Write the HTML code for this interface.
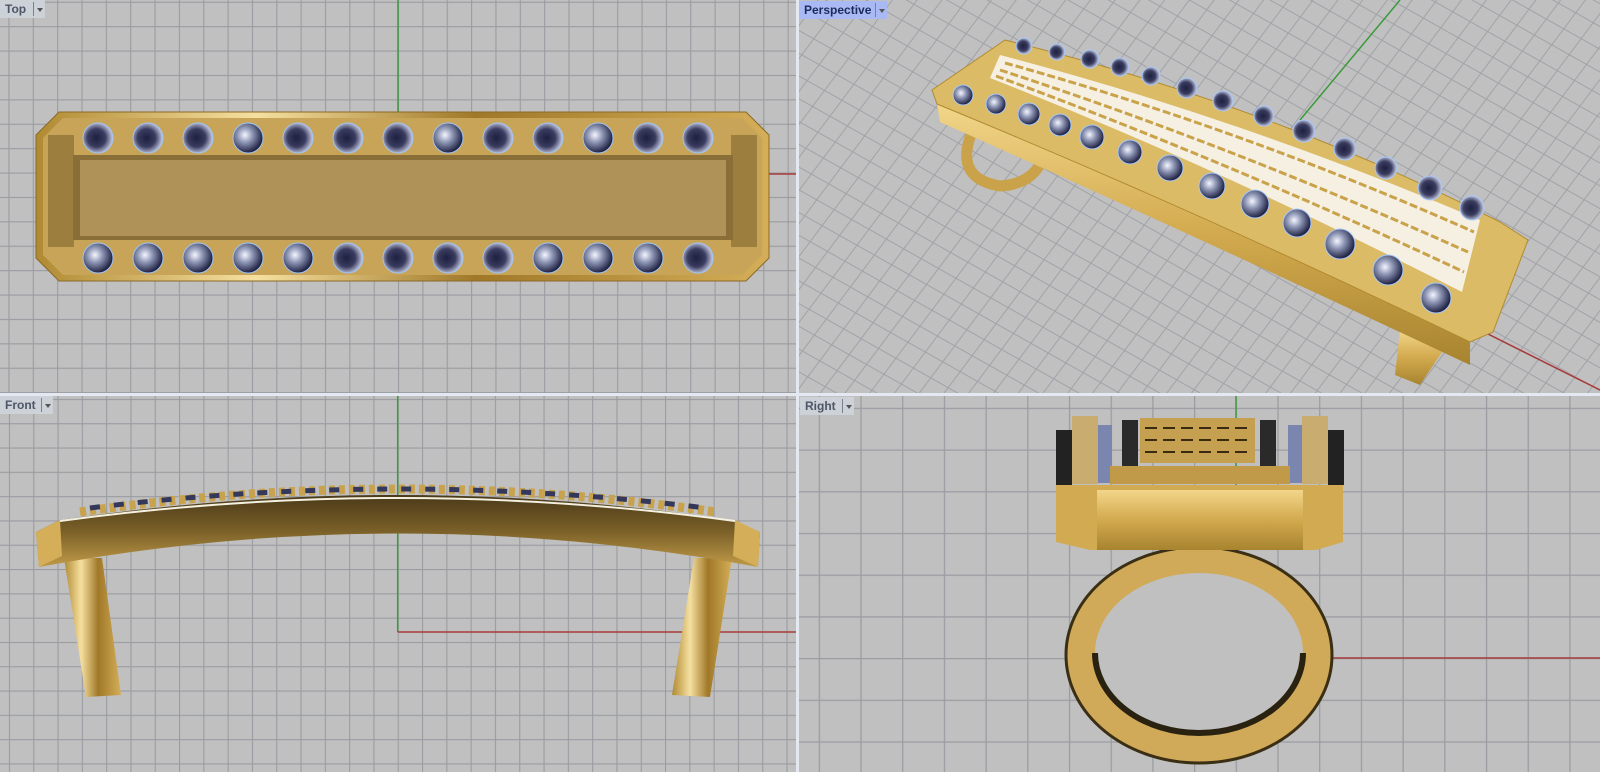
<!DOCTYPE html>
<html><head><meta charset="utf-8">
<style>
html,body{margin:0;padding:0;width:1600px;height:772px;overflow:hidden;background:#e4e8f0;}
.lbl{position:absolute;height:18px;background:#cdd1d8;font:bold 12px "Liberation Sans",sans-serif;color:#4d5666;line-height:18px;padding-left:5px;box-sizing:border-box;}
.lbl .dd{position:absolute;top:2px;bottom:2px;width:11px;border-left:1px solid #7a8290;}
.lbl .dd:after{content:"";position:absolute;left:3px;top:6px;border-left:3px solid transparent;border-right:3px solid transparent;border-top:4px solid #555;}
</style></head><body>
<svg width="1600" height="772" viewBox="0 0 1600 772" style="position:absolute;left:0;top:0">
<defs>
<pattern id="gTop" width="24.35" height="24.4" patternUnits="userSpaceOnUse" x="8.4" y="1.7">
<rect width="24.35" height="24.4" fill="#c0c0c0"/><path d="M0.5 0V24.4M0 0.5H24.35" stroke="#9a9ca2" stroke-width="1.2"/></pattern>
<pattern id="gFront" width="24.3" height="24.3" patternUnits="userSpaceOnUse" x="8.9" y="10.1">
<rect width="24.3" height="24.3" fill="#c0c0c0"/><path d="M0.5 0V24.3M0 0.5H24.3" stroke="#9a9ca2" stroke-width="1.2"/></pattern>
<pattern id="gRight" width="41.7" height="41.7" patternUnits="userSpaceOnUse" x="26.4" y="32.5">
<rect width="41.7" height="41.7" fill="#c0c0c0"/><path d="M0.5 0V41.7M0 0.5H41.7" stroke="#9a9ca2" stroke-width="1.5"/></pattern>
<pattern id="gPersp" width="20" height="20" patternUnits="userSpaceOnUse" patternTransform="matrix(0.87,0.49,0.6,-0.8,1236,300)">
<rect width="20" height="20" fill="#c0c0c0"/><path d="M0.5 0V20M0 0.5H20" stroke="#a0a2a8" stroke-width="1"/></pattern>
<linearGradient id="gold" x1="0" y1="0" x2="0" y2="1"><stop offset="0" stop-color="#f2d68a"/><stop offset="0.5" stop-color="#d2a94e"/><stop offset="1" stop-color="#a8842f"/></linearGradient>
<linearGradient id="goldH" x1="0" y1="0" x2="1" y2="0"><stop offset="0" stop-color="#b08a32"/><stop offset="0.3" stop-color="#f6e0a0"/><stop offset="0.6" stop-color="#a07828"/><stop offset="1" stop-color="#d4ae58"/></linearGradient>
<linearGradient id="band" x1="0" y1="0" x2="0" y2="1"><stop offset="0" stop-color="#4a3a1a"/><stop offset="0.5" stop-color="#7a6028"/><stop offset="1" stop-color="#c09a48"/></linearGradient>
<radialGradient id="gem" cx="0.4" cy="0.4" r="0.6"><stop offset="0" stop-color="#f4f6ff"/><stop offset="0.45" stop-color="#8890b0"/><stop offset="1" stop-color="#1e2040"/></radialGradient>
<radialGradient id="gem2" cx="0.45" cy="0.5" r="0.6"><stop offset="0" stop-color="#1e2040"/><stop offset="0.5" stop-color="#3a3c60"/><stop offset="1" stop-color="#e8ecff"/></radialGradient>
</defs>
<rect x="0" y="0" width="796" height="393" fill="url(#gTop)"/>
<rect x="799" y="0" width="801" height="393" fill="url(#gPersp)"/>
<rect x="0" y="396" width="796" height="376" fill="url(#gFront)"/>
<rect x="799" y="396" width="801" height="376" fill="url(#gRight)"/>
<line x1="398" y1="0" x2="398" y2="174" stroke="#3c9a3c" stroke-width="1.5"/>
<line x1="398" y1="174" x2="796" y2="174" stroke="#a83a3a" stroke-width="1.5"/>
<line x1="397.7" y1="396" x2="397.7" y2="632" stroke="#3c9a3c" stroke-width="1.5"/>
<line x1="397.7" y1="632" x2="796" y2="632" stroke="#a83a3a" stroke-width="1.5"/>
<line x1="1236" y1="396" x2="1236" y2="658" stroke="#3c9a3c" stroke-width="1.5"/>
<line x1="1236" y1="658" x2="1600" y2="658" stroke="#a83a3a" stroke-width="1.5"/>
<line x1="1400" y1="0" x2="1300" y2="120" stroke="#3c9a3c" stroke-width="1.5"/>
<line x1="1440" y1="310" x2="1600" y2="390" stroke="#a83a3a" stroke-width="1.5"/>

<!-- TOP VIEW -->
<polygon points="59,112 746,112 769,135 769,258 746,281 59,281 36,258 36,135" fill="url(#goldH)" stroke="#8a6a28"/>
<polygon points="63,118 742,118 762,138 762,255 742,275 63,275 43,255 43,138" fill="#c7a458"/>
<rect x="48" y="135" width="26" height="112" fill="#9c7e3e"/>
<rect x="731" y="135" width="26" height="112" fill="#9c7e3e"/>
<rect x="73" y="155" width="660" height="85" fill="#8a6e38"/>
<rect x="80" y="160" width="646" height="76" fill="#ae9258"/>
<g stroke="#a0c4f4">
<circle cx="98" cy="138" r="15" fill="url(#gem2)"/><circle cx="148" cy="138" r="15" fill="url(#gem2)"/><circle cx="198" cy="138" r="15" fill="url(#gem2)"/><circle cx="248" cy="138" r="15" fill="url(#gem)"/><circle cx="298" cy="138" r="15" fill="url(#gem2)"/><circle cx="348" cy="138" r="15" fill="url(#gem2)"/><circle cx="398" cy="138" r="15" fill="url(#gem2)"/><circle cx="448" cy="138" r="15" fill="url(#gem)"/><circle cx="498" cy="138" r="15" fill="url(#gem2)"/><circle cx="548" cy="138" r="15" fill="url(#gem2)"/><circle cx="598" cy="138" r="15" fill="url(#gem)"/><circle cx="648" cy="138" r="15" fill="url(#gem2)"/><circle cx="698" cy="138" r="15" fill="url(#gem2)"/>
<circle cx="98" cy="258" r="15" fill="url(#gem)"/><circle cx="148" cy="258" r="15" fill="url(#gem)"/><circle cx="198" cy="258" r="15" fill="url(#gem)"/><circle cx="248" cy="258" r="15" fill="url(#gem)"/><circle cx="298" cy="258" r="15" fill="url(#gem)"/><circle cx="348" cy="258" r="15" fill="url(#gem2)"/><circle cx="398" cy="258" r="15" fill="url(#gem2)"/><circle cx="448" cy="258" r="15" fill="url(#gem2)"/><circle cx="498" cy="258" r="15" fill="url(#gem2)"/><circle cx="548" cy="258" r="15" fill="url(#gem)"/><circle cx="598" cy="258" r="15" fill="url(#gem)"/><circle cx="648" cy="258" r="15" fill="url(#gem)"/><circle cx="698" cy="258" r="15" fill="url(#gem2)"/>
</g>

<!-- PERSPECTIVE VIEW -->
<path d="M975,125 Q950,178 1000,186 Q1032,184 1042,160" fill="none" stroke="#c9a24a" stroke-width="11"/>
<polygon points="1400,330 1450,340 1420,385 1395,375" fill="url(#gold)"/>
<path d="M937,104 Q1200,212 1470,340 L1470,365 Q1200,238 940,122 Z" fill="url(#gold)"/>
<path d="M932,90 L1005,40 Q1270,105 1500,222 L1528,240 L1493,332 L1470,342 Q1200,212 937,104 Z" fill="#dcbb66" stroke="#b08a30"/>
<path d="M1000,55 Q1240,118 1480,220 L1462,292 Q1220,168 990,78 Z" fill="#f6f0e2"/>
<path d="M1005,63 Q1240,128 1474,232 M1000,70 Q1230,145 1468,252 M996,76 Q1225,160 1464,272" stroke="#c9a24a" stroke-width="3" fill="none" stroke-dasharray="8 3"/>
<g fill="url(#gem)" stroke="#a8c8f8">
<circle cx="963" cy="95" r="10"/><circle cx="996" cy="104" r="10"/><circle cx="1029" cy="114" r="11"/><circle cx="1060" cy="125" r="11"/><circle cx="1092" cy="137" r="12"/><circle cx="1130" cy="152" r="12"/><circle cx="1170" cy="168" r="13"/><circle cx="1212" cy="186" r="13"/><circle cx="1255" cy="204" r="14"/><circle cx="1297" cy="223" r="14"/><circle cx="1340" cy="244" r="15"/><circle cx="1388" cy="270" r="15"/><circle cx="1436" cy="298" r="15"/>
</g>
<g fill="url(#gem2)" stroke="#a8c8f8">
<circle cx="1024" cy="46" r="8"/><circle cx="1057" cy="52" r="8"/><circle cx="1090" cy="59" r="9"/><circle cx="1120" cy="67" r="9"/><circle cx="1151" cy="76" r="9"/><circle cx="1187" cy="88" r="10"/><circle cx="1223" cy="101" r="10"/><circle cx="1264" cy="116" r="10"/><circle cx="1304" cy="131" r="11"/><circle cx="1345" cy="149" r="11"/><circle cx="1386" cy="168" r="11"/><circle cx="1430" cy="188" r="12"/><circle cx="1472" cy="208" r="12"/>
</g>

<!-- FRONT VIEW -->
<polygon points="64,558 102,558 121,695 86,697" fill="url(#goldH)"/>
<polygon points="694,558 732,558 710,697 672,695" fill="url(#goldH)"/>
<path d="M36,532 L60,520 Q398,470 730,520 L760,532 L758,567 Q398,500 39,567 Z" fill="url(#band)"/>
<path d="M36,532 L60,520 L62,556 L39,567 Z M760,532 L735,520 L733,556 L758,567 Z" fill="#d4ae58"/>
<path d="M60,521 Q398,475 735,521" stroke="#f4f0e0" stroke-width="2" fill="none"/>
<path d="M80,512 Q398,466 716,512" stroke="#c8a24c" stroke-width="9" fill="none" stroke-dasharray="6 4"/>
<path d="M90,508 Q398,470 706,508" stroke="#34385a" stroke-width="5" fill="none" stroke-dasharray="10 14"/>

<!-- RIGHT VIEW -->
<ellipse cx="1199" cy="655" rx="133" ry="108" fill="#d0aa58"/>
<ellipse cx="1199" cy="655" rx="133" ry="108" fill="none" stroke="#3a2e14" stroke-width="3"/>
<ellipse cx="1199" cy="653" rx="104" ry="80" fill="#c0c0c0"/>
<path d="M1095,653 A104,80 0 0,0 1303,653" fill="none" stroke="#2a2210" stroke-width="6"/>
<rect x="1056" y="430" width="16" height="55" fill="#222"/><rect x="1328" y="430" width="16" height="55" fill="#222"/>
<rect x="1072" y="416" width="26" height="68" fill="#c9ad70"/><rect x="1302" y="416" width="26" height="68" fill="#c9ad70"/>
<rect x="1098" y="425" width="14" height="58" fill="#7a86b0"/><rect x="1288" y="425" width="14" height="58" fill="#7a86b0"/>
<rect x="1122" y="420" width="16" height="60" fill="#2a2a2a"/><rect x="1260" y="420" width="16" height="60" fill="#2a2a2a"/>
<rect x="1140" y="418" width="115" height="45" fill="#c4a050"/>
<path d="M1145,428H1250M1145,440H1250M1145,452H1250" stroke="#3a2a10" stroke-width="2" stroke-dasharray="12 6"/>
<rect x="1110" y="466" width="180" height="18" fill="#c09a48"/>
<polygon points="1056,485 1343,485 1343,542 1316,550 1090,550 1056,542" fill="#d2aa52"/>
<rect x="1097" y="490" width="206" height="60" fill="url(#gold)"/>
</svg>
<div class="lbl" style="left:0;top:0;width:45px;">Top<span class="dd" style="left:33px"></span></div>
<div class="lbl" style="left:799px;top:1px;width:88px;background:#a9b9f4;color:#1c2a5c;">Perspective<span class="dd" style="left:76px"></span></div>
<div class="lbl" style="left:0;top:396px;width:53px;">Front<span class="dd" style="left:41px"></span></div>
<div class="lbl" style="left:800px;top:397px;width:54px;">Right<span class="dd" style="left:42px"></span></div>
</body></html>
